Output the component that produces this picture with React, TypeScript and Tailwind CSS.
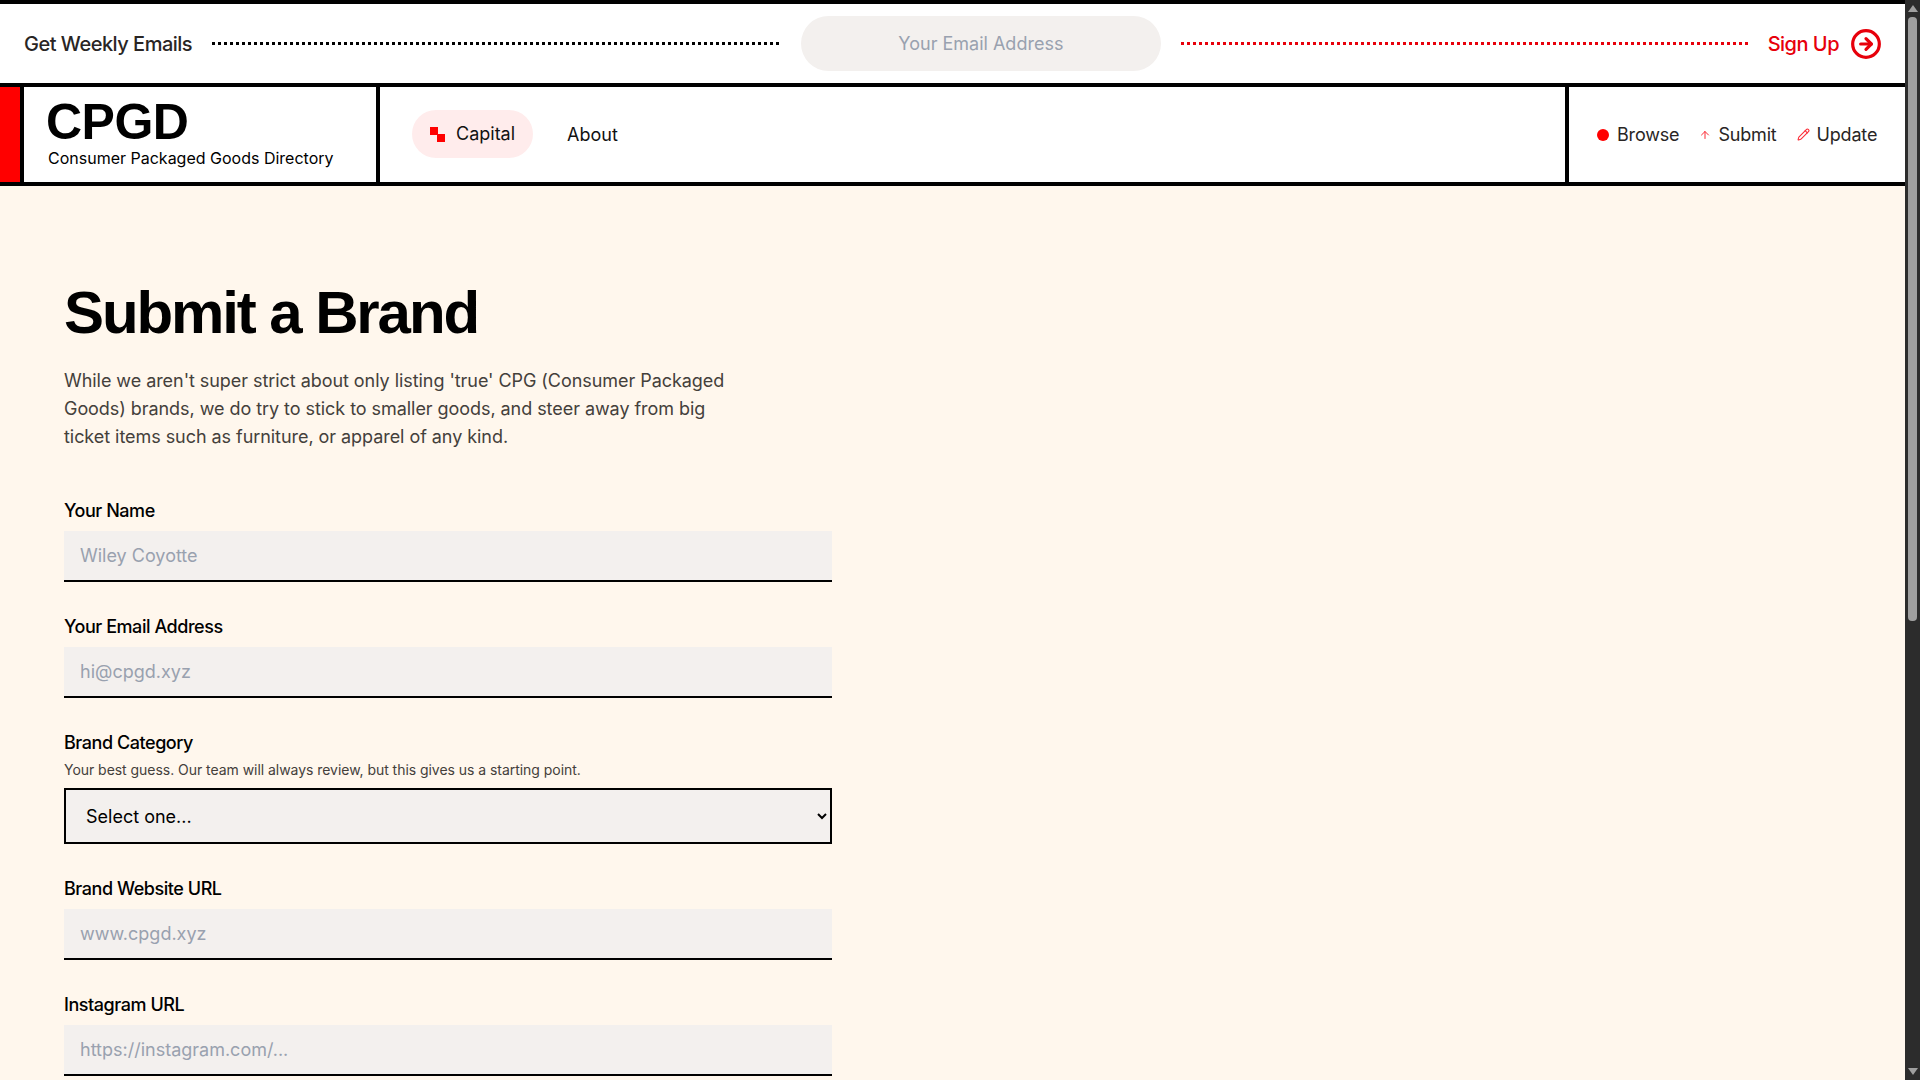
import { ArrowUp, CircleArrowRight, Pencil } from "lucide-react";

const Field = ({ label, placeholder }: { label: string; placeholder: string }) => (
  <div className="mb-[31px]">
    <label className="block text-lg leading-7 font-medium tracking-tight text-black mb-[6px]">
      {label}
    </label>
    <input
      placeholder={placeholder}
      className="block w-full h-[51px] px-4 bg-[#f3f0ee] border-b-2 border-black text-lg placeholder:text-gray-400 outline-none"
    />
  </div>
);

const App = () => {
  return (
    <div className="flex h-screen overflow-hidden bg-[#2c2c2c] font-['Inter',sans-serif]">
      <div className="w-[1905px] h-full overflow-hidden bg-[#fff7ed]">
        {/* signup strip */}
        <div className="h-[87px] bg-white border-y-4 border-black flex items-center pl-6 pr-[23px]">
          <span className="text-xl font-medium tracking-tight text-stone-800 whitespace-nowrap">
            Get Weekly Emails
          </span>
          <div className="flex-1 ml-5 border-t-[3px] border-dotted border-black" />
          <input
            placeholder="Your Email Address"
            className="w-[360px] h-[55px] ml-[22px] mr-5 rounded-full bg-[#f3f0ee] text-lg text-center placeholder:text-gray-400 outline-none"
          />
          <div className="flex-1 mr-5 border-t-[3px] border-dotted border-[#e7000b]" />
          <span className="text-xl font-medium tracking-tight text-[#e7000b] whitespace-nowrap">
            Sign Up
          </span>
          <CircleArrowRight size={32} strokeWidth={2.4} className="ml-[11px] text-[#e7000b]" />
        </div>

        {/* main nav */}
        <div className="h-[99px] bg-white border-b-4 border-black flex">
          <div className="w-5 bg-[#ff0000]" />
          <div className="w-[360px] border-x-4 border-black pl-[22px] pt-[9px]">
            <div className="font-['Liberation_Sans',sans-serif] text-[50px] leading-[52px] font-bold tracking-[-0.01em] text-black">CPGD</div>
            <div className="ml-[2px] text-base leading-5 text-black">Consumer Packaged Goods Directory</div>
          </div>
          <div className="flex-1 flex items-center pl-8 pb-[1px]">
            <a className="h-12 flex items-center gap-[11px] pl-[18px] pr-[18px] rounded-full bg-[#ffecec] text-lg text-[#111]">
              <svg width="15" height="15" viewBox="0 0 15 15">
                <rect x="0" y="0" width="8" height="8" fill="#ff0000" />
                <rect x="7" y="7" width="8" height="8" fill="#ff0000" />
              </svg>
              Capital
            </a>
            <a className="ml-[34px] pt-[1px] text-lg text-[#111]">About</a>
          </div>
          <div className="w-[340px] border-l-4 border-black flex items-center pl-7 text-lg tracking-[-0.01em] text-stone-800">
            <span className="w-3 h-3 rounded-full bg-[#ff0000] mr-2" />
            <span>Browse</span>
            <ArrowUp size={12} strokeWidth={2} className="ml-5 mr-[7px] text-red-500" />
            <span>Submit</span>
            <Pencil size={13} strokeWidth={2} className="ml-5 mr-[7px] text-red-500" />
            <span>Update</span>
          </div>
        </div>

        {/* form */}
        <div className="pl-16 pt-[97px] w-[832px]">
          <h1 className="font-['Liberation_Sans',sans-serif] text-6xl leading-none font-bold tracking-[-0.035em] text-black">Submit a Brand</h1>
          <p className="mt-6 mb-[46px] max-w-[672px] text-lg leading-7 tracking-[-0.003em] text-stone-700">
            While we aren't super strict about only listing 'true' CPG (Consumer Packaged Goods) brands, we do try to stick to smaller goods, and steer away from big ticket items such as furniture, or apparel of any kind.
          </p>
          <Field label="Your Name" placeholder="Wiley Coyotte" />
          <Field label="Your Email Address" placeholder="hi@cpgd.xyz" />
          <div className="mb-[31px]">
            <label className="block text-lg leading-7 font-medium tracking-tight text-black">Brand Category</label>
            <p className="mt-[3px] mb-[8px] text-sm leading-5 tracking-[-0.003em] text-stone-700">
              Your best guess. Our team will always review, but this gives us a starting point.
            </p>
            <select className="block w-full h-14 px-4 bg-[#f3f0ee] border-2 border-black text-lg text-black outline-none">
              <option>Select one...</option>
            </select>
          </div>
          <Field label="Brand Website URL" placeholder="www.cpgd.xyz" />
          <Field label="Instagram URL" placeholder="https://instagram.com/..." />
        </div>
      </div>

      {/* scrollbar as it appears in the shot */}
      <div className="w-[15px] h-full flex flex-col items-center py-[5px]">
        <div className="w-0 h-0 border-x-[5px] border-b-[7px] border-x-transparent border-b-[#9f9f9f]" />
        <div className="w-[9px] h-[604px] mt-[5px] rounded-[4px] bg-[#9f9f9f]" />
        <div className="flex-1" />
        <div className="w-0 h-0 border-x-[5px] border-t-[7px] border-x-transparent border-t-[#9f9f9f]" />
      </div>
    </div>
  );
};

export default App;
